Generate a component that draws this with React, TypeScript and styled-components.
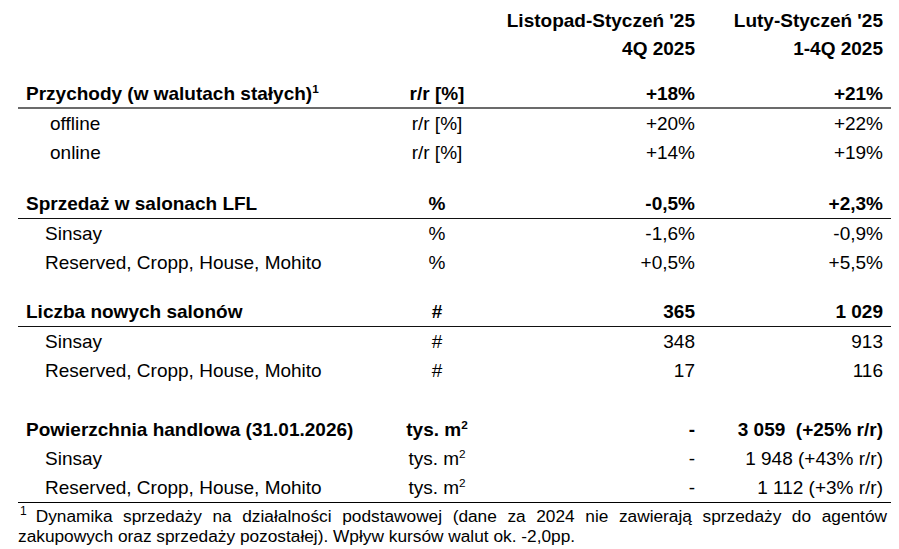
import styled, { createGlobalStyle } from 'styled-components';

type Line = 'gray' | 'dark' | 'none';

type Item = {
  label: string;
  unit: string;
  a: string;
  b: string;
};

type Group = Item & {
  sup?: string;
  line: Line;
  gap: number;
  indent: number;
  rows: Item[];
};

const M2 = 'tys. m';

const groups: Group[] = [
  {
    label: 'Przychody (w walutach stałych)', sup: '1', unit: 'r/r [%]', a: '+18%', b: '+21%',
    line: 'gray', gap: 17, indent: 24,
    rows: [
      { label: 'offline', unit: 'r/r [%]', a: '+20%', b: '+22%' },
      { label: 'online', unit: 'r/r [%]', a: '+14%', b: '+19%' },
    ],
  },
  {
    label: 'Sprzedaż w salonach LFL', unit: '%', a: '-0,5%', b: '+2,3%',
    line: 'dark', gap: 22, indent: 19,
    rows: [
      { label: 'Sinsay', unit: '%', a: '-1,6%', b: '-0,9%' },
      { label: 'Reserved, Cropp, House, Mohito', unit: '%', a: '+0,5%', b: '+5,5%' },
    ],
  },
  {
    label: 'Liczba nowych salonów', unit: '#', a: '365', b: '1 029',
    line: 'dark', gap: 20, indent: 19,
    rows: [
      { label: 'Sinsay', unit: '#', a: '348', b: '913' },
      { label: 'Reserved, Cropp, House, Mohito', unit: '#', a: '17', b: '116' },
    ],
  },
  {
    label: 'Powierzchnia handlowa (31.01.2026)', unit: M2, a: '-', b: '3 059  (+25% r/r)',
    line: 'none', gap: 30, indent: 19,
    rows: [
      { label: 'Sinsay', unit: M2, a: '-', b: '1 948 (+43% r/r)' },
      { label: 'Reserved, Cropp, House, Mohito', unit: M2, a: '-', b: '1 112 (+3% r/r)' },
    ],
  },
];

const GlobalStyle = createGlobalStyle`
  html, body {
    margin: 0;
    padding: 0;
    background: #ffffff;
  }
  body {
    font-family: "Liberation Sans", Arial, sans-serif;
    color: #000000;
  }
`;

const Page = styled.div`
  width: 899px;
  height: 549px;
  padding: 7px 8px 0 18px;
  box-sizing: border-box;
  overflow: hidden;
`;

const Cols = styled.div`
  display: grid;
  grid-template-columns: 354px 114px 201px 188px;
  padding: 0 8px;
`;

const HeadBlock = styled(Cols)`
  font-size: 19px;
  font-weight: bold;
  line-height: 28px;
`;

const HeadCell = styled.div`
  text-align: right;
  white-space: nowrap;
`;

const Table = styled.div`
  border-bottom: 1px solid #000000;
`;

const GroupBox = styled.div<{ $gap: number }>`
  margin-top: ${p => p.$gap}px;
`;

const Row = styled(Cols)<{ $bold?: boolean; $line?: Line }>`
  height: ${p => (p.$line === 'gray' ? 27 : 29)}px;
  align-items: center;
  font-size: 19px;
  font-weight: ${p => (p.$bold ? 'bold' : 'normal')};
  border-bottom: ${p =>
    p.$line === 'gray' ? '2px solid #6b6b6b' : p.$line === 'dark' ? '1px solid #111111' : 'none'};
`;

const Label = styled.div<{ $indent?: number }>`
  padding-left: ${p => p.$indent ?? 0}px;
  white-space: nowrap;
`;

const Unit = styled.div`
  text-align: center;
  white-space: nowrap;
`;

const Value = styled.div`
  text-align: right;
  white-space: pre;
`;

const Sup = styled.sup`
  font-size: 0.62em;
  vertical-align: 0.6em;
  line-height: 0;
`;

const Note = styled.div`
  margin-top: 2px;
  font-size: 17.3px;
  line-height: 20px;
  text-align: justify;
  width: 869px;
`;

const NoteMark = styled.span`
  display: inline-block;
  font-size: 12px;
  line-height: 12px;
  vertical-align: 7px;
  margin: 0 9px 0 2px;
`;

const unitText = (u: string) =>
  u === M2 ? (
    <>
      {u}
      <Sup>2</Sup>
    </>
  ) : (
    u
  );

export default function App() {
  return (
    <Page>
      <GlobalStyle />
      <HeadBlock>
        <div />
        <div />
        <HeadCell>
          Listopad-Styczeń '25
          <br />
          4Q 2025
        </HeadCell>
        <HeadCell>
          Luty-Styczeń '25
          <br />
          1-4Q 2025
        </HeadCell>
      </HeadBlock>
      <Table>
        {groups.map(g => (
          <GroupBox key={g.label} $gap={g.gap}>
            <Row $bold $line={g.line}>
              <Label>
                {g.label}
                {g.sup && <Sup>{g.sup}</Sup>}
              </Label>
              <Unit>{unitText(g.unit)}</Unit>
              <Value>{g.a}</Value>
              <Value>{g.b}</Value>
            </Row>
            {g.rows.map(r => (
              <Row key={r.label}>
                <Label $indent={g.indent}>{r.label}</Label>
                <Unit>{unitText(r.unit)}</Unit>
                <Value>{r.a}</Value>
                <Value>{r.b}</Value>
              </Row>
            ))}
          </GroupBox>
        ))}
      </Table>
      <Note>
        <NoteMark>1</NoteMark>
        Dynamika sprzedaży na działalności podstawowej (dane za 2024 nie zawierają sprzedaży do agentów
        zakupowych oraz sprzedaży pozostałej). Wpływ kursów walut ok. -2,0pp.
      </Note>
    </Page>
  );
}
